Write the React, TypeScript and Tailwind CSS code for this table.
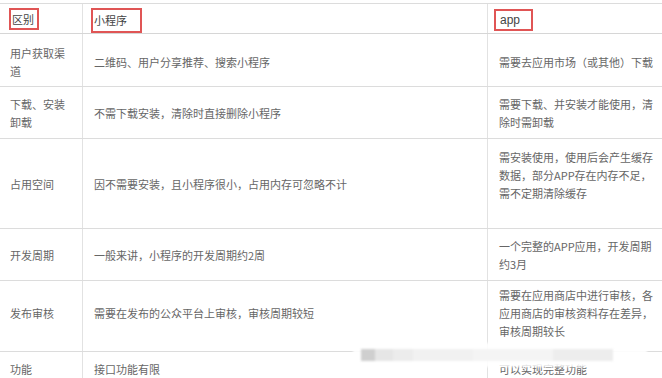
import React from "react";

type Row = {
  name: string[];
  mini: string[];
  app: string[];
  h: string;
  pad?: string;
};

const rows: Row[] = [
  { name: ["用户获取渠", "道"], mini: ["二维码、用户分享推荐、搜索小程序"], app: ["需要去应用市场（或其他）下载"], h: "h-[53px]", pad: "pt-[4px]" },
  { name: ["下载、安装", "卸载"], mini: ["不需下载安装，清除时直接删除小程序"], app: ["需要下载、并安装才能使用，清", "除时需卸载"], h: "h-[52px]" },
  { name: ["占用空间"], mini: ["因不需要安装，且小程序很小，占用内存可忽略不计"], app: ["需安装使用，使用后会产生缓存", "数据，部分APP存在内存不足，", "需不定期清除缓存", "\u00a0"], h: "h-[90px]" },
  { name: ["开发周期"], mini: ["一般来讲，小程序的开发周期约2周"], app: ["一个完整的APP应用，开发周期", "约3月"], h: "h-[52px]" },
  { name: ["发布审核"], mini: ["需要在发布的公众平台上审核，审核周期较短"], app: ["需要在应用商店中进行审核，各", "应用商店的审核资料存在差异，", "审核周期较长"], h: "h-[71px]", pad: "pb-[7px]" },
];

function Cell({ lines, className }: { lines: string[]; className: string }) {
  return (
    <div className={"flex flex-col justify-center pl-[10px] " + className}>
      {lines.map((l, i) => (
        <div key={i}>{l}</div>
      ))}
    </div>
  );
}

export default function App() {
  return (
    <div
      className="relative w-[662px] h-[378px] overflow-hidden bg-white pt-[3px] text-[11px] leading-[18px] text-[#666]"
      style={{ fontFamily: '"Noto Sans CJK SC", "Noto Sans", sans-serif' }}
    >
      <div className="border-t border-[#dcdcdc]">
        {/* header */}
        <div className="grid grid-cols-[83px_405px_1fr] h-[30px] border-b border-[#d6d6d6] text-[#444]">
          <div className="flex items-center pl-[9px] border-r border-[#e2e2e2]">
            <span className="flex items-center w-[30px] h-[22px] pl-[1px] border-2 border-[#e05555]">区别</span>
          </div>
          <div className="flex items-center pl-[8px] border-r border-[#e2e2e2]">
            <span className="flex items-center w-[51px] h-[25px] mt-[3px] pl-[1px] border-2 border-[#e05555]">小程序</span>
          </div>
          <div className="flex items-center pl-[6px]">
            <span className="flex items-center w-[39px] h-[22px] mt-[3px] pl-[4px] border-2 border-[#e05555] text-[12px]" style={{ fontFamily: '"Liberation Sans", sans-serif' }}>
              app
            </span>
          </div>
        </div>

        {rows.map((r, i) => (
          <div key={i} className={"grid grid-cols-[83px_405px_1fr] border-b border-[#dcdcdc] " + r.h}>
            <Cell lines={r.name} className={"border-r border-[#e2e2e2] " + (r.pad ?? "")} />
            <Cell lines={r.mini} className={"border-r border-[#e2e2e2] pl-[11px] " + (r.pad ?? "")} />
            <Cell lines={r.app} className={"pl-[11px] " + (r.pad ?? "")} />
          </div>
        ))}

        <div className="grid grid-cols-[83px_405px_1fr] h-[40px]">
          <div className="pl-[10px] pt-[8px] border-r border-[#e2e2e2]">功能</div>
          <div className="pl-[11px] pt-[8px] border-r border-[#e2e2e2]">接口功能有限</div>
          <div className="pl-[11px] pt-[8px]">可以实现完整功能</div>
        </div>
      </div>

      {/* blurred watermark band */}
      <div className="absolute left-[353px] top-[343px] w-[294px] h-[24px] bg-white/90 blur-[1px] flex items-center">
        <div className="w-[14px] h-[12px] ml-[8px] bg-[#cfcfcf]" />
        <div className="w-[18px] h-[12px] bg-[#e6e6e6]" />
        <div className="w-[20px] h-[12px] bg-[#ececec]" />
        <div className="w-[60px] h-[12px] bg-[#f1f1f1]" />
        <div className="w-[80px] h-[12px] bg-[#f4f4f4]" />
        <div className="w-[60px] h-[12px] bg-[#ededed]" />
      </div>
    </div>
  );
}
